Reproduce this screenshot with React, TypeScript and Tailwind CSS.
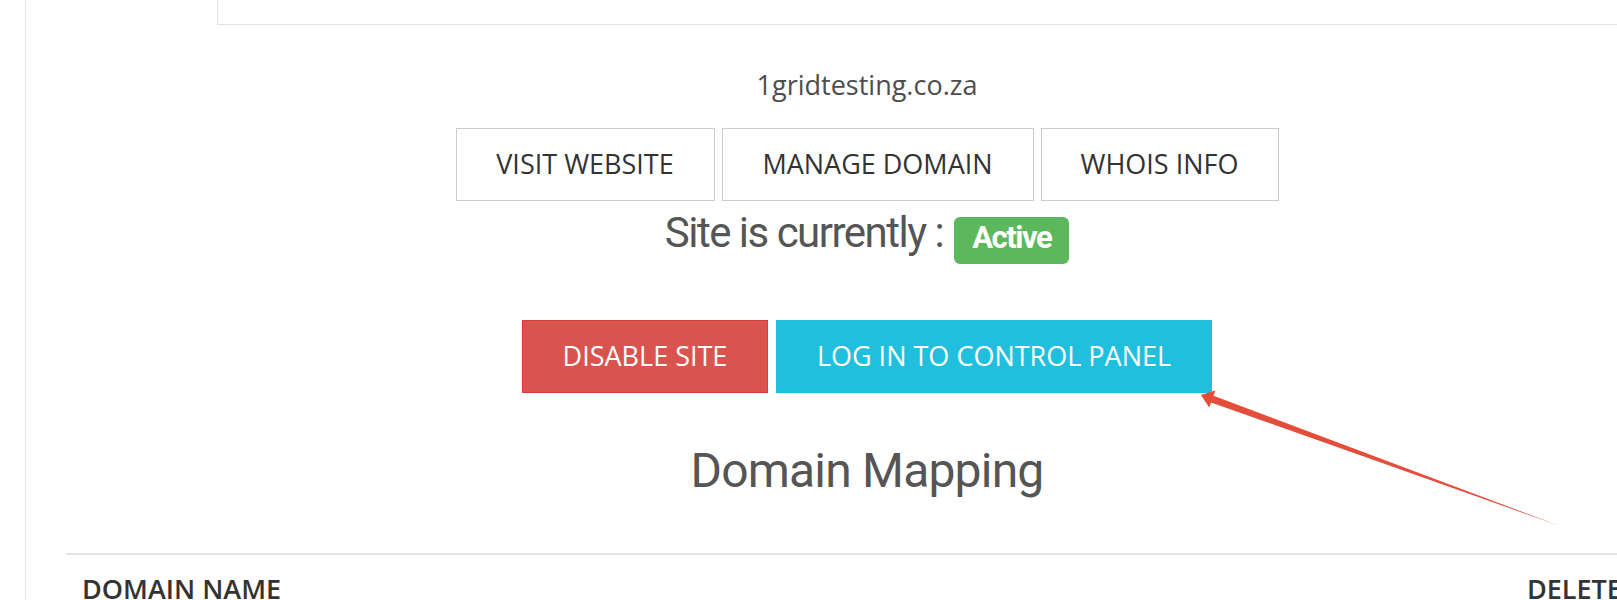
import React from "react";

const openSans = { fontFamily: '"Open Sans", "Liberation Sans", sans-serif' };
const roboto = { fontFamily: 'Roboto, "Liberation Sans", sans-serif' };

function OutlineButton({ label, width }: { label: string; width: string }) {
  return (
    <button
      className={`${width} h-[73px] flex items-center justify-center border border-[#cccccc] bg-white text-[27px] text-[#333333] uppercase`}
    >
      {label}
    </button>
  );
}

function Arrow() {
  // tapered red annotation arrow pointing at the control panel button
  return (
    <svg className="absolute inset-0 pointer-events-none" width="1617" height="600">
      <polygon
        points="1201,395 1215.4,390.6 1213.5,395.8 1560,526 1211.1,402.4 1209.2,407.6"
        fill="#e34d3a"
      />
    </svg>
  );
}

export default function App() {
  return (
    <div className="relative w-[1617px] h-[600px] overflow-hidden bg-white" style={openSans}>
      <div className="flex h-full">
        <div className="w-[26px] shrink-0 border-r border-[#e5e5e5]" />
        <div className="w-[1682px] shrink-0">
          <div className="ml-[191px] w-[1500px] h-[25px] border-x border-b border-[#e2e2e2]" />

          <div className="mt-[41px] text-center text-[27px] leading-[38px] text-[#4d4d4d]">
            1gridtesting.co.za
          </div>

          <div className="mt-[24px] flex justify-center gap-[7px]">
            <OutlineButton label="Visit Website" width="w-[259px]" />
            <OutlineButton label="Manage Domain" width="w-[312px]" />
            <OutlineButton label="Whois Info" width="w-[238px]" />
          </div>

          <div className="mt-[11px] flex justify-center items-start gap-[11px]">
            <span
              className="text-[42px] leading-[42px] tracking-[-1.5px] text-[#555555]"
              style={roboto}
            >
              Site is currently :
            </span>
            <span
              className="mt-[5px] w-[115px] pt-[5px] pb-[11px] rounded-[6px] bg-[#5cb85c] text-center text-[31px] leading-[31px] font-bold tracking-[-1.5px] text-white"
              style={roboto}
            >
              Active
            </span>
          </div>

          <div className="mt-[56px] flex justify-center gap-[8px]">
            <button className="w-[246px] h-[73px] flex items-center justify-center border border-[#d43f3a] bg-[#d9534f] text-[27px] text-white uppercase">
              Disable Site
            </button>
            <button className="w-[436px] h-[73px] flex items-center justify-center border border-[#22bfdd] bg-[#21bfde] text-[27px] text-white uppercase">
              Log in to Control Panel
            </button>
          </div>

          <h2
            className="mt-[54px] text-center text-[48px] leading-[48px] tracking-[-0.8px] text-[#555555]"
            style={roboto}
          >
            Domain Mapping
          </h2>

          <div className="mx-[40px] mt-[58px] border-t-2 border-[#e6e6e6] flex">
            <div className="flex-1 pl-[16px] pt-[15px] text-[27px] leading-[38px] font-semibold text-[#333333]">
              DOMAIN NAME
            </div>
            <div className="w-[157px] pl-[16px] pt-[15px] text-[27px] leading-[38px] font-semibold text-[#333333]">
              DELETE
            </div>
          </div>
        </div>
      </div>
      <Arrow />
    </div>
  );
}
